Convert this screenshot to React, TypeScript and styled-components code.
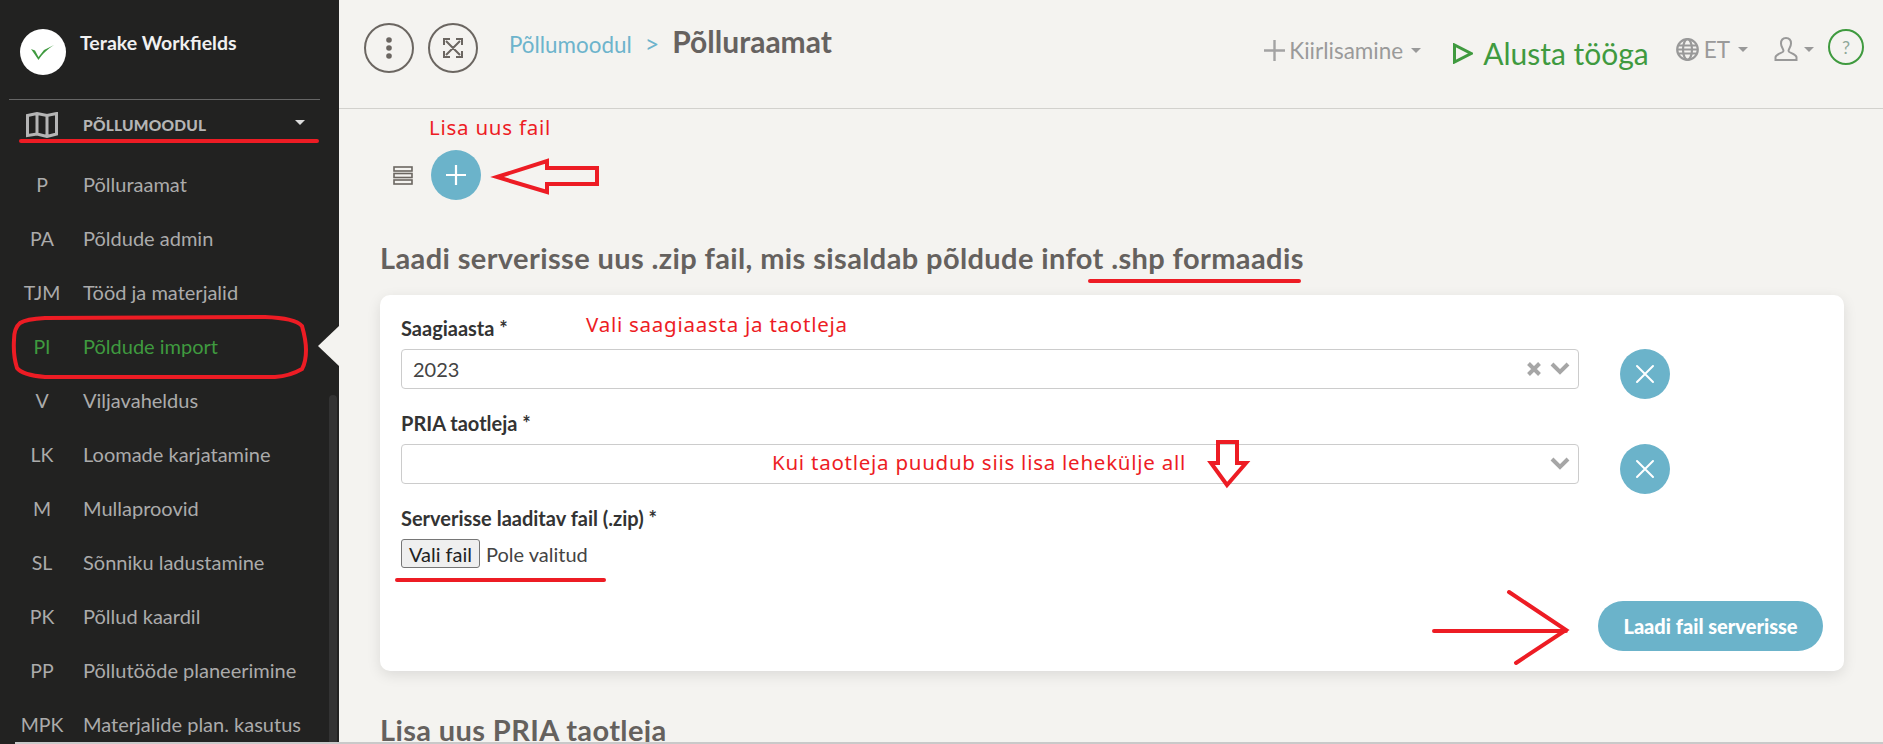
import styled, { createGlobalStyle } from "styled-components";

const GlobalStyle = createGlobalStyle`
  html, body {
    margin: 0;
    height: 100%;
    overflow: hidden;
    background: #f4f3f0;
    font-family: "Lato", "Open Sans", sans-serif;
  }
  * {
    box-sizing: border-box;
  }
`;

const Page = styled.div`
  position: relative;
  display: grid;
  grid-template-columns: 339px 1fr;
  height: 744px;
  overflow: hidden;
`;

/* sidebar */
const Sidebar = styled.aside`
  position: relative;
  background: #222221;
  overflow: hidden;
`;
const Brand = styled.div`
  display: flex;
  align-items: flex-start;
  height: 99px;
  padding: 29px 0 0 20px;
`;
const LogoCircle = styled.div`
  display: flex;
  align-items: center;
  justify-content: center;
  width: 46px;
  height: 46px;
  border-radius: 50%;
  background: #fff;
`;
const BrandName = styled.div`
  margin: 3px 0 0 14px;
  color: #f0f0f0;
  font-size: 19.5px;
  font-weight: 700;
  line-height: 22px;
`;
const Divider = styled.hr`
  width: 311px;
  height: 1px;
  margin: 0 0 0 9px;
  border: 0;
  background: #666;
`;
const ModuleRow = styled.div`
  display: flex;
  align-items: center;
  height: 49px;
  margin-bottom: 8px;
  padding-left: 26px;
  color: #b5b5b5;
`;
const ModuleName = styled.span`
  margin-left: 25px;
  font-size: 15.5px;
  font-weight: 900;
  letter-spacing: 0.2px;
`;
const Caret = styled.span<{ $color?: string; $size?: number }>`
  display: inline-block;
  width: 0;
  height: 0;
  border-left: ${(p) => p.$size ?? 5}px solid transparent;
  border-right: ${(p) => p.$size ?? 5}px solid transparent;
  border-top: ${(p) => p.$size ?? 5}px solid ${(p) => p.$color ?? "#999"};
`;
const ModuleCaret = styled(Caret)`
  margin: -4px 34px 0 auto;
`;
const MenuItem = styled.div<{ $active?: boolean }>`
  position: relative;
  display: flex;
  align-items: center;
  height: 54px;
  color: ${(p) => (p.$active ? "#3f9a3f" : "#ababab")};
  font-size: 20px;
  ${(p) =>
    p.$active &&
    `&::after {
      content: "";
      position: absolute;
      right: 0;
      top: 7px;
      border-top: 20px solid transparent;
      border-bottom: 20px solid transparent;
      border-right: 21px solid #f4f3f0;
    }`}
`;
const Abbr = styled.span`
  flex: none;
  width: 84px;
  margin-right: -1px;
  font-size: 19.5px;
  text-align: center;
`;
const ScrollThumb = styled.div`
  position: absolute;
  right: 2px;
  top: 395px;
  bottom: 0;
  width: 8px;
  border-radius: 4px 4px 0 0;
  background: #333;
`;

/* top bar */
const Main = styled.main`
  display: flex;
  flex-direction: column;
  min-width: 0;
`;
const TopBar = styled.header`
  display: flex;
  flex: none;
  height: 109px;
  padding: 23px 19px 0 25px;
  border-bottom: 1px solid #d2d1cd;
`;
const RoundButton = styled.button`
  display: flex;
  align-items: center;
  justify-content: center;
  width: 50px;
  height: 50px;
  margin-right: 14px;
  padding: 0;
  border: 2px solid #6b6661;
  border-radius: 50%;
  background: transparent;
`;
const Breadcrumb = styled.div`
  display: flex;
  align-items: baseline;
  height: 40px;
  margin-left: 17px;
`;
const CrumbLink = styled.span`
  color: #6db4cc;
  font-size: 22.4px;
`;
const CrumbArrow = styled(CrumbLink)`
  margin: 0 13px;
  font-size: 25px;
`;
const CrumbTitle = styled.span`
  color: #666260;
  font-size: 30px;
  font-weight: 700;
`;
const TopActions = styled.div`
  display: flex;
  margin-left: auto;
  color: #9a9a9a;
  font-size: 22.5px;
`;
const TopAction = styled.div<{ $top: number; $gap: number; $inner?: number }>`
  display: flex;
  align-items: center;
  height: 44px;
  margin-top: ${(p) => p.$top}px;
  margin-left: ${(p) => p.$gap}px;
  gap: ${(p) => p.$inner ?? 8}px;
`;
const QuickIcon = styled.svg`
  margin-right: -4px;
`;
const EtCaret = styled(Caret)`
  margin-left: 3px;
`;
const StartLabel = styled.span`
  color: #3f9a3f;
  font-size: 30px;
`;
const HelpBadge = styled.div`
  display: flex;
  align-items: center;
  justify-content: center;
  width: 36px;
  height: 36px;
  margin: 6px 0 0 14px;
  border: 2px solid #3f9a3f;
  border-radius: 50%;
  color: #8fa89a;
  font-size: 18px;
`;

/* content */
const Content = styled.div`
  flex: 1;
  padding: 41px 39px 0 41px;
`;
const Toolbar = styled.div`
  display: flex;
  align-items: center;
  gap: 18px;
  padding-left: 13px;
`;
const AddButton = styled.button`
  display: flex;
  align-items: center;
  justify-content: center;
  width: 50px;
  height: 50px;
  padding: 0;
  border: 0;
  border-radius: 50%;
  background: #6bb3ca;
`;
const SectionTitle = styled.h2`
  height: 36px;
  margin: 40px 0 0;
  color: #65615e;
  font-size: 29px;
  font-weight: 700;
  line-height: 36px;
  letter-spacing: 0.38px;
  white-space: nowrap;
`;
const Card = styled.section`
  margin-top: 19px;
  padding: 21px 21px 20px;
  border-radius: 10px;
  background: #fff;
  box-shadow: 0 4px 14px rgba(0, 0, 0, 0.1);
`;
const FieldLabel = styled.div`
  height: 24px;
  color: #333;
  font-size: 20px;
  font-weight: 700;
  line-height: 24px;
`;
const FieldRow = styled.div`
  display: flex;
  align-items: flex-start;
  gap: 41px;
  margin: 9px 0 12px;
`;
const SelectBox = styled.div`
  display: flex;
  align-items: center;
  width: 1178px;
  height: 40px;
  padding: 0 8px 0 11px;
  border: 1px solid #ccc;
  border-radius: 4px;
  color: #444;
  font-size: 20px;
`;
const SelectIcons = styled.div`
  display: flex;
  align-items: center;
  gap: 9px;
  margin-left: auto;
`;
const ClearButton = styled(AddButton)``;
const FileRow = styled.div`
  display: flex;
  align-items: center;
  gap: 6px;
  margin-top: 9px;
  color: #444;
  font-size: 20px;
`;
const FileButton = styled.button`
  width: 79px;
  height: 29px;
  padding: 0;
  border: 1px solid #767676;
  border-radius: 3px;
  background: #efefef;
  color: #222;
  font: inherit;
  line-height: 1;
`;
const CardActions = styled.div`
  display: flex;
  justify-content: flex-end;
  margin-top: 33px;
`;
const SubmitButton = styled.button`
  width: 225px;
  height: 50px;
  padding: 0;
  border: 0;
  border-radius: 25px;
  background: #6bb3ca;
  color: #fff;
  font-family: inherit;
  font-size: 20px;
  font-weight: 900;
`;
const NextTitle = styled(SectionTitle)`
  margin-top: 41px;
`;

/* red markings drawn over the screenshot */
const Markings = styled.svg`
  position: absolute;
  inset: 0;
  pointer-events: none;
`;
const Note = styled.span<{ $x: number; $y: number }>`
  position: absolute;
  left: ${(p) => p.$x}px;
  top: ${(p) => p.$y}px;
  color: #ed1c24;
  font-family: "Noto Sans", sans-serif;
  font-size: 20.5px;
  line-height: 24px;
  white-space: nowrap;
  letter-spacing: 0.75px;
`;
const BottomEdge = styled.div`
  position: absolute;
  left: 15px;
  right: 0;
  bottom: 0;
  height: 2px;
  background: #c9c9c9;
`;

const menu = [
  ["P", "Põlluraamat"],
  ["PA", "Põldude admin"],
  ["TJM", "Tööd ja materjalid"],
  ["PI", "Põldude import"],
  ["V", "Viljavaheldus"],
  ["LK", "Loomade karjatamine"],
  ["M", "Mullaproovid"],
  ["SL", "Sõnniku ladustamine"],
  ["PK", "Põllud kaardil"],
  ["PP", "Põllutööde planeerimine"],
  ["MPK", "Materjalide plan. kasutus"],
];

const CrossIcon = () => (
  <svg width="20" height="20" viewBox="0 0 20 20" fill="none" stroke="#fff" strokeWidth="2" strokeLinecap="round">
    <path d="M2 2 18 18M18 2 2 18" />
  </svg>
);

const Chevron = () => (
  <svg width="20" height="14" viewBox="0 0 20 14" fill="none" stroke="#a6a6a6" strokeWidth="4">
    <path d="M2 2 10 10 18 2" />
  </svg>
);

const App = () => (
  <Page>
    <GlobalStyle />
    <Sidebar>
      <Brand>
        <LogoCircle>
          <svg width="24" height="16" viewBox="0 0 24 16" fill="#3f9a3f">
            <path d="M0 5 4 6.5 7.5 13 13 6 23 1 C17 5 12 9 7.5 16 Z" />
          </svg>
        </LogoCircle>
        <BrandName>Terake Workfields</BrandName>
      </Brand>
      <Divider />
      <ModuleRow>
        <svg width="32" height="26" viewBox="0 0 32 26" fill="none" stroke="#b5b5b5" strokeWidth="3">
          <path d="M1.5 3.5 11 1.5 21 3.5 30.5 1.5V22L21 24.5 11 22 1.5 23.5ZM11 1.5V22M21 3.5V24.5" />
        </svg>
        <ModuleName>PÕLLUMOODUL</ModuleName>
        <ModuleCaret $color="#ddd" />
      </ModuleRow>
      {menu.map(([abbr, label]) => (
        <MenuItem key={abbr} $active={abbr === "PI"}>
          <Abbr>{abbr}</Abbr>
          {label}
        </MenuItem>
      ))}
      <ScrollThumb />
    </Sidebar>
    <Main>
      <TopBar>
        <RoundButton aria-label="menu">
          <svg width="8" height="22" viewBox="0 0 8 22" fill="#6b6661">
            <circle cx="4" cy="3" r="2.8" />
            <circle cx="4" cy="11" r="2.8" />
            <circle cx="4" cy="19" r="2.8" />
          </svg>
        </RoundButton>
        <RoundButton aria-label="fullscreen">
          <svg width="20" height="20" viewBox="0 0 20 20" fill="none" stroke="#6b6661" strokeWidth="2">
            <path d="M3 3 17 17M17 3 3 17M1 7V1H7M13 1H19V7M19 13V19H13M7 19H1V13" />
          </svg>
        </RoundButton>
        <Breadcrumb>
          <CrumbLink>Põllumoodul</CrumbLink>
          <CrumbArrow>&gt;</CrumbArrow>
          <CrumbTitle>Põlluraamat</CrumbTitle>
        </Breadcrumb>
        <TopActions>
          <TopAction $top={5} $gap={0}>
            <QuickIcon width="21" height="21" viewBox="0 0 21 21" stroke="#a3a3a3" strokeWidth="2.4">
              <path d="M0 10.5H21M10.5 0V21" />
            </QuickIcon>
            Kiirlisamine
            <Caret />
          </TopAction>
          <TopAction $top={8} $gap={32} $inner={10}>
            <svg width="20" height="21" viewBox="0 0 20 21" fill="none" stroke="#3f9a3f" strokeWidth="3">
              <path d="M1.5 2V19L18 10.5Z" />
            </svg>
            <StartLabel>Alusta tööga</StartLabel>
          </TopAction>
          <TopAction $top={4} $gap={27} $inner={5}>
            <svg width="23" height="23" viewBox="0 0 23 23" fill="none" stroke="#999" strokeWidth="2.2">
              <circle cx="11.5" cy="11.5" r="10.3" />
              <ellipse cx="11.5" cy="11.5" rx="4.5" ry="10.3" />
              <path d="M2 7.5H21M2 15.5H21M1 11.5H22" />
            </svg>
            ET
            <EtCaret />
          </TopAction>
          <TopAction $top={4} $gap={26} $inner={6}>
            <svg width="24" height="24" viewBox="0 0 24 24" fill="none" stroke="#999" strokeWidth="2">
              <path d="M12 1C8.5 1 7 3.500 7 6.500 7 10 9.500 11.500 9.500 14 9.500 16 2.500 16.500 1.500 20V23H22.500V20C21.500 16.500 14.500 16 14.500 14 14.500 11.500 17 10 17 6.500 17 3.500 15.500 1 12 1Z" />
            </svg>
            <Caret />
          </TopAction>
          <HelpBadge>?</HelpBadge>
        </TopActions>
      </TopBar>
      <Content>
        <Toolbar>
          <svg width="20" height="19" viewBox="0 0 20 19" fill="none" stroke="#6b6661" strokeWidth="1.6">
            <rect x="1" y="1" width="18" height="4" />
            <rect x="1" y="7.5" width="18" height="4" />
            <rect x="1" y="14" width="18" height="4" />
          </svg>
          <AddButton aria-label="add">
            <svg width="20" height="20" viewBox="0 0 20 20" stroke="#fff" strokeWidth="2.2">
              <path d="M0 10H20M10 0V20" />
            </svg>
          </AddButton>
        </Toolbar>
        <SectionTitle>Laadi serverisse uus .zip fail, mis sisaldab põldude infot .shp formaadis</SectionTitle>
        <Card>
          <FieldLabel>Saagiaasta *</FieldLabel>
          <FieldRow>
            <SelectBox>
              2023
              <SelectIcons>
                <svg width="14" height="14" viewBox="0 0 14 14" stroke="#a6a6a6" strokeWidth="4">
                  <path d="M1.5 1.5 12.5 12.5M12.5 1.5 1.5 12.5" />
                </svg>
                <Chevron />
              </SelectIcons>
            </SelectBox>
            <ClearButton aria-label="clear">
              <CrossIcon />
            </ClearButton>
          </FieldRow>
          <FieldLabel>PRIA taotleja *</FieldLabel>
          <FieldRow>
            <SelectBox>
              <SelectIcons>
                <Chevron />
              </SelectIcons>
            </SelectBox>
            <ClearButton aria-label="clear">
              <CrossIcon />
            </ClearButton>
          </FieldRow>
          <FieldLabel>Serverisse laaditav fail (.zip) *</FieldLabel>
          <FileRow>
            <FileButton>Vali fail</FileButton>
            Pole valitud
          </FileRow>
          <CardActions>
            <SubmitButton>Laadi fail serverisse</SubmitButton>
          </CardActions>
        </Card>
        <NextTitle>Lisa uus PRIA taotleja</NextTitle>
      </Content>
    </Main>
    <BottomEdge />
    <Markings width="1883" height="744" viewBox="0 0 1883 744" fill="none" stroke="#ed1c24" strokeWidth="4" strokeLinecap="round">
      <path d="M21 141H317" />
      <path d="M20 323Q26 319 45 318L265 317Q295 318 302 326Q306 340 306 350Q306 362 302 369Q290 376 275 377L45 377Q22 375 17 368Q13 355 14 340Q14 328 20 323Z" />
      <path d="M497 177 547 161V168H597V184H547V192Z" />
      <path d="M1090 281H1299" />
      <path d="M1218 442H1237V463H1246L1227 485 1211 463H1218Z" />
      <path d="M397 580H604" />
      <path d="M1434 631H1566M1509 592 1566 630 1516 663" />
    </Markings>
    <Note $x={429} $y={115}>Lisa uus fail</Note>
    <Note $x={586} $y={312}>Vali saagiaasta ja taotleja</Note>
    <Note $x={772} $y={450}>Kui taotleja puudub siis lisa lehekülje all</Note>
  </Page>
);

export default App;
